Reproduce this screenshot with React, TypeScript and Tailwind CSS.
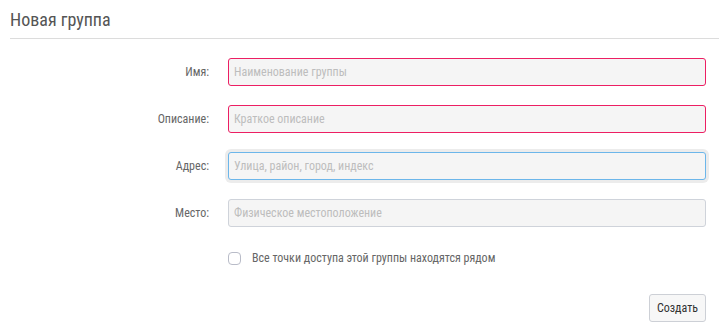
import React from "react";

const font = {
  fontFamily: '"Liberation Sans Narrow", "Roboto Condensed", "DejaVu Sans Condensed", "Liberation Sans", sans-serif',
};

function Row({ label, placeholder, variant }: { label: string; placeholder: string; variant: "error" | "focus" | "normal" }) {
  const border =
    variant === "error"
      ? "border-[#ec1f63]"
      : variant === "focus"
      ? "border-[#6cb6ea] shadow-[0_0_0_3px_#ececec]"
      : "border-[#cfd3da]";
  return (
    <div className="grid grid-cols-[199px_1fr] gap-x-[19px] items-center h-[28px]">
      <label className="text-right text-[12px] text-[#666]">{label}</label>
      <input
        placeholder={placeholder}
        className={`h-[28px] w-full rounded-[3px] border bg-[#f5f5f5] px-[5px] text-[12px] text-[#555] placeholder:text-[#bdbdbd] outline-none ${border}`}
        style={font}
      />
    </div>
  );
}

export default function App() {
  return (
    <div className="w-[719px] h-[334px] bg-white pl-[10px] pr-[13px]" style={font}>
      <div className="pt-[7px] pb-[6px] border-b border-[#dcdcdc] -mr-[13px]">
        <h1 className="text-[18px] leading-[25px] text-[#555]">Новая группа</h1>
      </div>
      <div className="mt-[19px] flex flex-col gap-[19px]">
        <Row label="Имя:" placeholder="Наименование группы" variant="error" />
        <Row label="Описание:" placeholder="Краткое описание" variant="error" />
        <Row label="Адрес:" placeholder="Улица, район, город, индекс" variant="focus" />
        <Row label="Место:" placeholder="Физическое местоположение" variant="normal" />
        <div className="grid grid-cols-[199px_1fr] gap-x-[19px] items-center h-[24px]">
          <div />
          <label className="flex items-center gap-[11px] text-[12px] text-[#666]">
            <span className="w-[13px] h-[13px] rounded-[4px] border border-[#b9bcc8] bg-white" />
            Все точки доступа этой группы находятся рядом
          </label>
        </div>
      </div>
      <div className="mt-[24px] flex justify-end">
        <button className="h-[28px] px-[7px] rounded-[3px] border border-[#cdd0d6] bg-[#f7f7f7] text-[12px] text-[#333]" style={font}>
          Создать
        </button>
      </div>
    </div>
  );
}
